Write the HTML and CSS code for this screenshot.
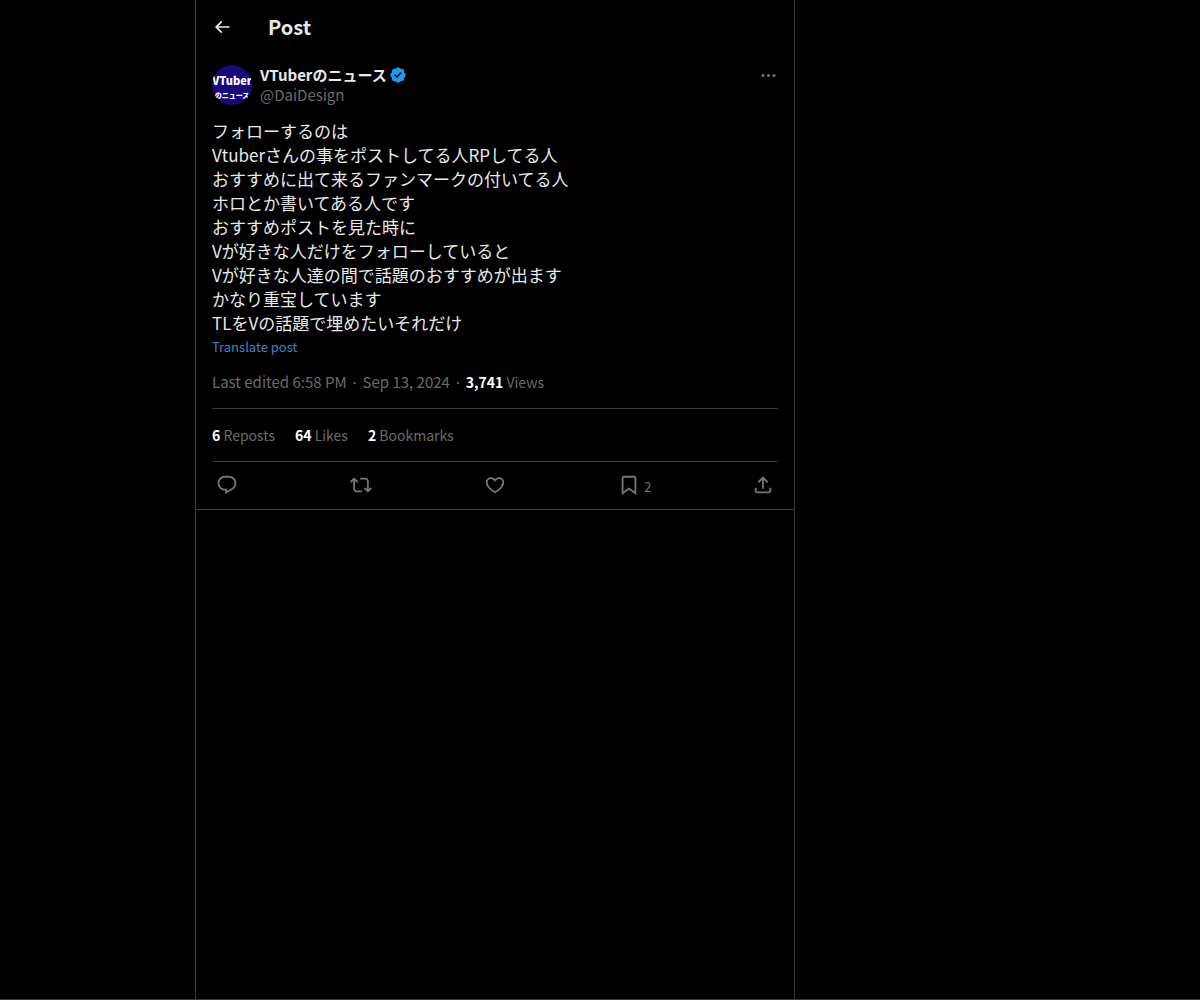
FILE: index.html
```html
<!DOCTYPE html>
<html lang="ja">
<head>
    <meta charset="UTF-8">
    <meta name="viewport" content="width=device-width, initial-scale=1.0">
    <title>Post</title>
    <link rel="stylesheet" href="styles.css">
</head>
<body>
    <main class="column">
        <header class="header">
            <button type="button" class="icon-button" aria-label="Back">
                <svg class="icon-back" viewBox="0 0 24 24"><path d="M7.414 13l5.043 5.04-1.414 1.42L3.586 12l7.457-7.46 1.414 1.42L7.414 11H21v2H7.414z"/></svg>
            </button>
            <h1>Post</h1>
        </header>

        <article class="post">
            <div class="author">
                <svg class="avatar" viewBox="0 0 40 40">
                    <circle cx="20" cy="20" r="20"/>
                    <text x="20" y="20" class="avatar-latin">VTuber</text>
                    <text x="20" y="33" class="avatar-kana">のニュース</text>
                </svg>
                <div class="author-info">
                    <div class="name">
                        VTuberのニュース
                        <svg class="verified" viewBox="0 0 22 22" aria-label="Verified account"><path d="M20.396 11c-.018-.646-.215-1.275-.57-1.816-.354-.54-.852-.972-1.438-1.246.223-.607.27-1.264.14-1.897-.131-.634-.437-1.218-.882-1.687-.47-.445-1.053-.75-1.687-.882-.633-.13-1.29-.083-1.897.14-.273-.587-.704-1.086-1.245-1.44S11.647 1.62 11 1.604c-.646.017-1.273.213-1.813.568s-.969.854-1.24 1.44c-.608-.223-1.267-.272-1.902-.14-.635.13-1.22.436-1.69.882-.445.47-.749 1.055-.878 1.688-.13.633-.08 1.29.144 1.896-.587.274-1.087.705-1.443 1.245-.356.54-.555 1.17-.574 1.817.02.647.218 1.276.574 1.817.356.54.856.972 1.443 1.245-.224.606-.274 1.263-.144 1.896.13.634.433 1.218.877 1.688.47.443 1.054.747 1.687.878.633.132 1.29.084 1.897-.136.274.586.705 1.084 1.246 1.439.54.354 1.17.551 1.816.569.647-.016 1.276-.213 1.817-.567s.972-.854 1.245-1.44c.604.239 1.266.296 1.903.164.636-.132 1.22-.447 1.68-.907.46-.46.776-1.044.908-1.681s.075-1.299-.165-1.903c.586-.274 1.084-.705 1.439-1.246.354-.54.551-1.17.569-1.816zM9.662 14.85l-3.429-3.428 1.293-1.302 2.072 2.072 4.4-4.794 1.347 1.246z"/></svg>
                    </div>
                    <div class="handle">@DaiDesign</div>
                </div>
                <button type="button" class="icon-button more" aria-label="More">
                    <svg viewBox="0 0 24 24"><path d="M3 12c0-1.1.9-2 2-2s2 .9 2 2-.9 2-2 2-2-.9-2-2zm9 2c1.1 0 2-.9 2-2s-.9-2-2-2-2 .9-2 2 .9 2 2 2zm7 0c1.1 0 2-.9 2-2s-.9-2-2-2-2 .9-2 2 .9 2 2 2z"/></svg>
                </button>
            </div>

            <p class="text">フォローするのは<br>
                Vtuberさんの事をポストしてる人RPしてる人<br>
                おすすめに出て来るファンマークの付いてる人<br>
                ホロとか書いてある人です<br>
                おすすめポストを見た時に<br>
                Vが好きな人だけをフォローしていると<br>
                Vが好きな人達の間で話題のおすすめが出ます<br>
                かなり重宝しています<br>
                TLをVの話題で埋めたいそれだけ</p>
            <a class="translate" href="#">Translate post</a>

            <div class="meta">
                <span>Last edited 6:58 PM</span>
                <span class="small">·</span>
                <span>Sep 13, 2024</span>
                <span class="small">·</span>
                <span class="small"><strong>3,741</strong> Views</span>
            </div>

            <div class="stats small">
                <span><strong>6</strong> Reposts</span>
                <span><strong>64</strong> Likes</span>
                <span><strong>2</strong> Bookmarks</span>
            </div>

            <div class="actions">
                <button type="button" class="icon-button" aria-label="Reply">
                    <svg viewBox="0 0 24 24"><path d="M1.751 10c0-4.42 3.584-8 8.005-8h4.366c4.49 0 8.129 3.64 8.129 8.13 0 2.96-1.607 5.68-4.196 7.11l-8.054 4.46v-3.69h-.067c-4.49.1-8.183-3.51-8.183-8.01zm8.005-6c-3.317 0-6.005 2.69-6.005 6 0 3.37 2.77 6.08 6.138 6.01l.351-.01h1.761v2.3l5.087-2.81c1.951-1.08 3.163-3.13 3.163-5.36 0-3.39-2.744-6.13-6.129-6.13H9.756z"/></svg>
                </button>
                <button type="button" class="icon-button" aria-label="Repost">
                    <svg viewBox="0 0 24 24"><path d="M4.5 3.88l4.432 4.14-1.364 1.46L5.5 7.55V16c0 1.1.896 2 2 2H13v2H7.5c-2.209 0-4-1.79-4-4V7.55L1.432 9.48.068 8.02 4.5 3.88zM16.5 6H11V4h5.5c2.209 0 4 1.79 4 4v8.45l2.068-1.93 1.364 1.46-4.432 4.14-4.432-4.14 1.364-1.46 2.068 1.93V8c0-1.1-.896-2-2-2z"/></svg>
                </button>
                <button type="button" class="icon-button" aria-label="Like">
                    <svg viewBox="0 0 24 24"><path d="M16.697 5.5c-1.222-.06-2.679.51-3.89 2.16l-.805 1.09-.806-1.09C9.984 6.01 8.526 5.44 7.304 5.5c-1.243.07-2.349.78-2.91 1.91-.552 1.12-.633 2.78.479 4.82 1.074 1.97 3.257 4.27 7.129 6.61 3.87-2.34 6.052-4.64 7.126-6.61 1.111-2.04 1.03-3.7.477-4.82-.561-1.13-1.666-1.84-2.908-1.91zm4.187 7.69c-1.351 2.48-4.001 5.12-8.379 7.67l-.503.3-.504-.3c-4.379-2.55-7.029-5.19-8.382-7.67-1.36-2.5-1.41-4.86-.514-6.67.887-1.79 2.647-2.91 4.601-3.01 1.651-.09 3.368.56 4.798 2.01 1.429-1.45 3.146-2.1 4.796-2.01 1.954.1 3.714 1.22 4.601 3.01.896 1.81.846 4.17-.514 6.67z"/></svg>
                </button>
                <button type="button" class="icon-button" aria-label="Bookmark">
                    <svg viewBox="0 0 24 24"><path d="M4 4.5C4 3.12 5.119 2 6.5 2h11C18.881 2 20 3.12 20 4.5v18.44l-8-5.71-8 5.71V4.5zM6.5 4c-.276 0-.5.22-.5.5v14.56l6-4.29 6 4.29V4.5c0-.28-.224-.5-.5-.5h-11z"/></svg>
                    <span class="count">2</span>
                </button>
                <button type="button" class="icon-button" aria-label="Share">
                    <svg viewBox="0 0 24 24"><path d="M12 2.59l5.7 5.7-1.41 1.42L13 6.41V16h-2V6.41l-3.3 3.3-1.41-1.42L12 2.59zM21 15l-.02 3.51c0 1.38-1.12 2.49-2.5 2.49H5.5C4.11 21 3 19.88 3 18.5V15h2v3.5c0 .28.22.5.5.5h12.98c.28 0 .5-.22.5-.5L19 15h2z"/></svg>
                </button>
            </div>
        </article>
    </main>
</body>
</html>
```
FILE: styles.css
```css
* {
    box-sizing: border-box;
}
body {
    margin: 0;
    min-height: 100vh;
    display: grid;
    grid-template-columns: 195px minmax(0, 600px) 1fr;
    background-color: #000;
    border-bottom: 1px solid #393637;
    color: #e7e9ea;
    font-family: "Noto Sans CJK JP", sans-serif;
    font-size: 15px;
    line-height: 20px;
}
.column {
    grid-column: 2;
    border-left: 1px solid #393939;
    border-right: 1px solid #393939;
}
.header {
    display: flex;
    align-items: center;
    gap: 36px;
    height: 53px;
    padding: 0 16px;
}
.header h1 {
    margin: 0;
    font-size: 20px;
    line-height: 24px;
}
.icon-button {
    display: flex;
    align-items: center;
    padding: 0;
    border: none;
    background: none;
    color: #757575;
    font: inherit;
    cursor: pointer;
}
.icon-button svg {
    width: 22px;
    height: 22px;
    fill: #757575;
}
.icon-button .icon-back {
    width: 20px;
    height: 20px;
    fill: #e7e9ea;
}
.post {
    padding: 12px 16px 0;
    border-bottom: 1px solid #393939;
}
.author {
    display: flex;
    align-items: flex-start;
    gap: 8px;
}
.avatar {
    width: 40px;
    height: 40px;
    border-radius: 50%;
    fill: #17087c;
}
.avatar text {
    fill: #fff;
    font-weight: 900;
    text-anchor: middle;
}
.avatar-latin {
    font-size: 11px;
}
.avatar-kana {
    font-size: 7px;
}
.author-info {
    flex: 1;
}
.name {
    display: flex;
    align-items: center;
    gap: 2px;
    font-weight: bold;
}
.verified {
    width: 18px;
    height: 18px;
    fill: #1d9bf0;
}
.handle {
    color: #6b6b6b;
}
.more {
    height: 20px;
}
.icon-button.more svg {
    width: 19px;
    height: 19px;
}
.text {
    margin: 14px 0 0;
    font-size: 17px;
    line-height: 24px;
}
.translate {
    display: block;
    color: #3a86c8;
    font-size: 13px;
    line-height: 24px;
    text-decoration: none;
}
.meta,
.stats {
    display: flex;
    color: #6b6b6b;
    border-bottom: 1px solid #393939;
}
.meta {
    align-items: baseline;
    gap: 4px;
    padding: 13px 0 16px;
}
.stats {
    gap: 20px;
    padding: 16px 0;
}
.small {
    font-size: 14px;
}
.meta strong,
.stats strong {
    color: #fff;
}
.actions {
    display: grid;
    grid-template-columns: repeat(4, 1fr) auto;
    padding: 12px 4px 13px;
}
.count {
    padding: 4px 0 0 4px;
    font-size: 13px;
    line-height: 18px;
}
```
